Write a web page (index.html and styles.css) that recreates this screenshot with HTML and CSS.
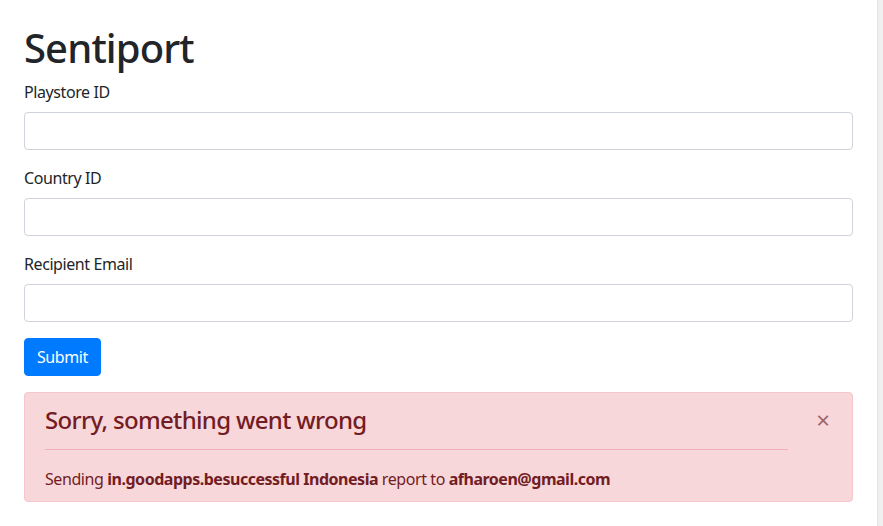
FILE: index.html
```html
<!DOCTYPE html>
<html lang="en">
<head>
<meta charset="utf-8">
<title>Sentiport</title>
<link rel="stylesheet" href="styles.css">
</head>
<body>
<div class="page">
  <main class="container">
    <h1 class="title">Sentiport</h1>
    <form class="form">
      <div class="form-group">
        <label class="label" for="pid">Playstore ID</label>
        <input class="input" id="pid" type="text">
      </div>
      <div class="form-group">
        <label class="label" for="cid">Country ID</label>
        <input class="input" id="cid" type="text">
      </div>
      <div class="form-group">
        <label class="label" for="mail">Recipient Email</label>
        <input class="input" id="mail" type="email">
      </div>
      <button class="btn" type="button">Submit</button>
    </form>
    <div class="alert">
      <h4 class="alert-heading">Sorry, something went wrong</h4>
      <button class="close" type="button" aria-label="Close">×</button>
      <hr class="alert-rule">
      <p class="alert-text">Sending <b>in.goodapps.besuccessful</b> <b>Indonesia</b> report to <b>afharoen@gmail.com</b></p>
    </div>
  </main>
  <div class="scrollbar"></div>
</div>
</body>
</html>
```
FILE: styles.css
```css
* { box-sizing: border-box; }
html, body { margin: 0; height: 100%; }
body {
  font-family: "Noto Sans", "Open Sans", sans-serif;
  font-size: 16px;
  line-height: 1.5;
  letter-spacing: -0.026em;
  color: #212529;
  background: #fff;
}
.page { display: flex; min-height: 100%; }
.container { flex: 1; padding: 24px; min-width: 0; }
.scrollbar { width: 6px; background: #f0f0f0; border-left: 1px solid #e6e6e6; }
.title {
  margin: 0 0 8px;
  font-size: 40px;
  font-weight: 500;
  line-height: 1.2;
  letter-spacing: -0.022em;
}
.form-group { margin-bottom: 16px; }
.label { display: inline-block; margin-bottom: 8px; }
.input {
  display: block;
  width: 100%;
  height: 38px;
  padding: 6px 12px;
  font: inherit;
  border: 1px solid #ced4da;
  border-radius: 4px;
  background: #fff;
}
.btn {
  display: inline-block;
  height: 38px;
  padding: 6px 12px;
  font: inherit;
  letter-spacing: inherit;
  color: #fff;
  background: #007bff;
  border: 1px solid #007bff;
  border-radius: 4px;
}
.alert {
  position: relative;
  margin-top: 16px;
  padding: 13px 64px 10px 20px;
  background: #f8d7da;
  border: 1px solid #f5c6cb;
  border-radius: 4px;
  color: #721c24;
}
.alert-heading {
  margin: 0 0 8px;
  font-size: 24px;
  font-weight: 500;
  line-height: 1.2;
  letter-spacing: -0.028em;
}
.alert-rule { margin: 14px 0 17px; border: 0; border-top: 1px solid #f1b0b7; }
.alert-text { margin: 0; }
.alert-text b { font-weight: 700; letter-spacing: -0.03em; }
.close {
  position: absolute;
  top: 0;
  right: 0;
  padding: 15px 22px 12px 20px;
  background: transparent;
  border: 0;
  font-family: inherit;
  font-size: 24px;
  font-weight: 400;
  line-height: 1;
  color: #a0646c;
}
```
